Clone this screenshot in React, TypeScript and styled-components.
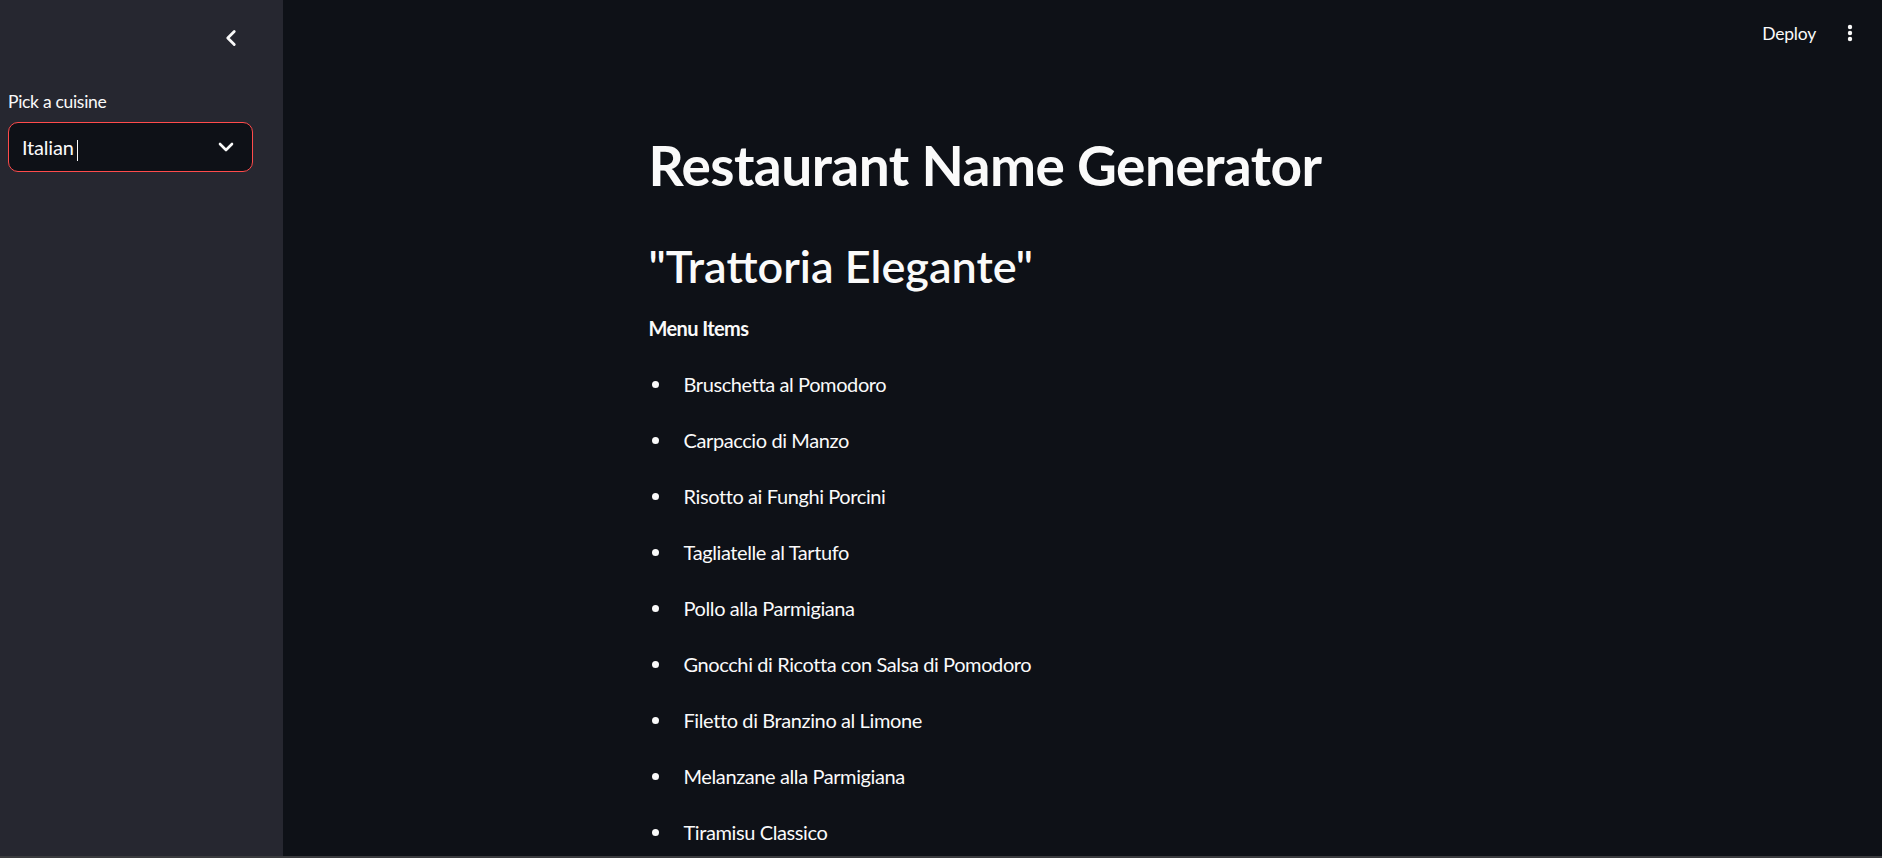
import React from "react";
import styled, { createGlobalStyle } from "styled-components";
import { ChevronLeft, ChevronDown } from "lucide-react";

const Global = createGlobalStyle`
  html, body { margin: 0; padding: 0; background: #0e1117; }
  body { font-family: Lato, "Noto Sans", sans-serif; color: #fafafa; }
  * { box-sizing: border-box; }
`;

const Shell = styled.div`
  display: flex;
  height: 100vh;
  overflow: hidden;
  border-bottom: 2px solid #3a3b3e;
`;

const Sidebar = styled.aside`
  width: 283px;
  flex-shrink: 0;
  background: #262730;
  padding: 0 30px 0 8px;
  display: flex;
  flex-direction: column;
`;

const SidebarHeader = styled.div`
  height: 76px;
  display: flex;
  align-items: center;
  justify-content: flex-end;
  padding-right: 9px;
  color: #fafafa;
`;

const Label = styled.label`
  font-size: 17.5px;
  line-height: 28px;
  margin-top: 12px;
  letter-spacing: -0.3px;
  color: #fafafa;
`;

const Select = styled.div`
  margin-top: 6px;
  height: 50px;
  border: 1px solid #ff4b4b;
  border-radius: 10px;
  background: #0e1117;
  display: flex;
  align-items: center;
  justify-content: space-between;
  padding: 0 14px 0 13px;
`;

const SelectValue = styled.span`
  font-size: 20px;
  line-height: 28px;
  letter-spacing: -0.2px;
  display: flex;
  align-items: center;
`;

const Caret = styled.span`
  display: inline-block;
  width: 1px;
  height: 21px;
  margin-left: 3px;
  margin-top: 6px;
  background: #fafafa;
`;

const Main = styled.main`
  flex: 1;
  display: flex;
  flex-direction: column;
  min-width: 0;
`;

const TopBar = styled.header`
  height: 66px;
  display: flex;
  align-items: center;
  justify-content: flex-end;
  padding-right: 22px;
  gap: 24px;
`;

const DeployButton = styled.button`
  background: none;
  border: none;
  color: #fafafa;
  font-family: inherit;
  font-size: 17.5px;
  letter-spacing: -0.2px;
  padding: 0;
`;

const MenuButton = styled.button`
  background: none;
  border: none;
  padding: 0;
  width: 20px;
  height: 24px;
  display: flex;
  align-items: center;
  justify-content: center;
`;

const Content = styled.div`
  width: 868px;
  margin: 0 auto;
  display: flex;
  flex-direction: column;
`;

const Title = styled.h1`
  margin: 66px 0 0;
  font-size: 55px;
  line-height: 66px;
  font-weight: 700;
  letter-spacing: -0.55px;
`;

const Subtitle = styled.h2`
  margin: 41px 0 0;
  font-size: 45px;
  line-height: 54px;
  font-weight: 600;
`;

const SectionLabel = styled.p`
  margin: 19px 0 0;
  font-size: 20px;
  line-height: 32px;
  font-weight: 700;
  letter-spacing: -0.6px;
`;

const List = styled.ul`
  margin: 24px 0 0;
  padding: 0;
  list-style: none;
  display: flex;
  flex-direction: column;
  gap: 24px;
`;

const Item = styled.li`
  display: flex;
  align-items: center;
  font-size: 20px;
  line-height: 32px;
  letter-spacing: -0.4px;
`;

const Bullet = styled.span`
  width: 35px;
  flex-shrink: 0;
  display: flex;
  align-items: center;
  &::before {
    content: "";
    width: 7px;
    height: 7px;
    border-radius: 50%;
    background: #fafafa;
    margin-left: 3px;
  }
`;

const items = [
  "Bruschetta al Pomodoro",
  "Carpaccio di Manzo",
  "Risotto ai Funghi Porcini",
  "Tagliatelle al Tartufo",
  "Pollo alla Parmigiana",
  "Gnocchi di Ricotta con Salsa di Pomodoro",
  "Filetto di Branzino al Limone",
  "Melanzane alla Parmigiana",
  "Tiramisu Classico",
];

export default function App() {
  return (
    <>
      <Global />
      <Shell>
        <Sidebar>
          <SidebarHeader>
            <ChevronLeft size={26} strokeWidth={2.6} color="#fafafa" />
          </SidebarHeader>
          <Label>Pick a cuisine</Label>
          <Select>
            <SelectValue>
              Italian
              <Caret />
            </SelectValue>
            <ChevronDown size={24} strokeWidth={2.6} color="#fafafa" />
          </Select>
        </Sidebar>
        <Main>
          <TopBar>
            <DeployButton>Deploy</DeployButton>
            <MenuButton aria-label="menu">
              <svg width="6" height="18" viewBox="0 0 6 18">
                <circle cx="3" cy="3" r="2.2" fill="#fafafa" />
                <circle cx="3" cy="9" r="2.2" fill="#fafafa" />
                <circle cx="3" cy="15" r="2.2" fill="#fafafa" />
              </svg>
            </MenuButton>
          </TopBar>
          <Content>
            <Title>Restaurant Name Generator</Title>
            <Subtitle>"Trattoria Elegante"</Subtitle>
            <SectionLabel>Menu Items</SectionLabel>
            <List>
              {items.map((it) => (
                <Item key={it}>
                  <Bullet />
                  {it}
                </Item>
              ))}
            </List>
          </Content>
        </Main>
      </Shell>
    </>
  );
}
